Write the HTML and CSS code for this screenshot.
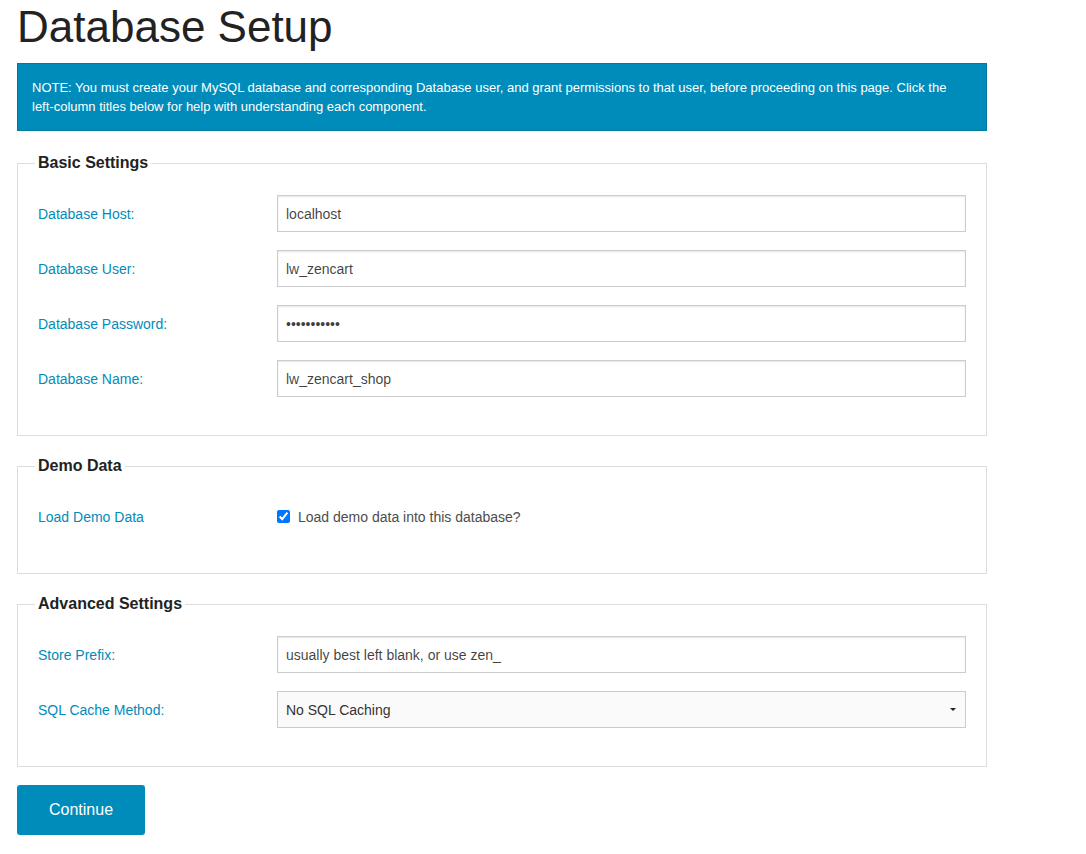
FILE: index.html
```html
<!DOCTYPE html>
<html lang="en">
<head>
<meta charset="utf-8">
<title>Database Setup</title>
<link rel="stylesheet" href="styles.css">
</head>
<body>
<main class="page">
  <h1 class="title">Database Setup</h1>
  <div class="alert">NOTE: You must create your MySQL database and corresponding Database user, and grant permissions to that user, before proceeding on this page. Click the left-column titles below for help with understanding each component.</div>

  <fieldset class="group">
    <legend class="group-title">Basic Settings</legend>
    <div class="row">
      <label class="row-label" for="db_host">Database Host:</label>
      <div class="row-field"><input class="text" id="db_host" type="text" value="localhost"></div>
    </div>
    <div class="row">
      <label class="row-label" for="db_user">Database User:</label>
      <div class="row-field"><input class="text" id="db_user" type="text" value="lw_zencart"></div>
    </div>
    <div class="row">
      <label class="row-label" for="db_pass">Database Password:</label>
      <div class="row-field"><input class="text" id="db_pass" type="password" value="abcdefghijk"></div>
    </div>
    <div class="row">
      <label class="row-label" for="db_name">Database Name:</label>
      <div class="row-field"><input class="text" id="db_name" type="text" value="lw_zencart_shop"></div>
    </div>
  </fieldset>

  <fieldset class="group">
    <legend class="group-title">Demo Data</legend>
    <div class="row">
      <span class="row-label">Load Demo Data</span>
      <div class="row-field">
        <label class="check"><input class="check-box" type="checkbox" checked><span>Load demo data into this database?</span></label>
      </div>
    </div>
  </fieldset>

  <fieldset class="group">
    <legend class="group-title">Advanced Settings</legend>
    <div class="row">
      <label class="row-label" for="db_prefix">Store Prefix:</label>
      <div class="row-field"><input class="text" id="db_prefix" type="text" value="usually best left blank, or use zen_"></div>
    </div>
    <div class="row">
      <label class="row-label" for="sql_cache">SQL Cache Method:</label>
      <div class="row-field">
        <div class="select-wrap">
          <select class="select" id="sql_cache">
            <option>No SQL Caching</option>
            <option>Database</option>
            <option>File</option>
          </select>
        </div>
      </div>
    </div>
  </fieldset>

  <button class="btn" type="button">Continue</button>
</main>
</body>
</html>
```

FILE: styles.css
```css
* { box-sizing: border-box; }

html, body {
  margin: 0;
  padding: 0;
  background: #fff;
}

body {
  font-family: "Liberation Sans", Arial, Helvetica, sans-serif;
  color: #222;
}

.page {
  width: 970px;
  margin-left: 17px;
}

.title {
  margin: 3px 0 12px;
  font-size: 44px;
  line-height: 48px;
  font-weight: normal;
  color: #222;
}

.alert {
  background: #008cba;
  border: 1px solid #0078a0;
  color: #fff;
  font-size: 13px;
  line-height: 19px;
  padding: 14px 24px 14px 14px;
  margin: 0 0 20px;
}

.group {
  border: 1px solid #ddd;
  margin: 0 0 18px;
  padding: 20px;
  min-width: 0;
}

.group-title {
  font-size: 16px;
  font-weight: bold;
  line-height: 24px;
  color: #222;
  background: #fff;
  padding: 0 3px;
  margin-left: -3px;
}

.row {
  display: flex;
  align-items: center;
  margin: 0 -15px 18px;
}

.row-label {
  flex: 0 0 239px;
  padding: 0 15px;
  font-size: 14px;
  color: #008cba;
  cursor: pointer;
}

.row-field {
  flex: 1 1 auto;
  padding: 0 15px;
  min-width: 0;
}

.text,
.select {
  display: block;
  width: 100%;
  height: 37px;
  margin: 0;
  padding: 0 8px;
  border: 1px solid #ccc;
  border-radius: 0;
  box-shadow: inset 0 1px 2px rgba(0, 0, 0, 0.1);
  background: #fff;
  font-family: "Liberation Sans", Arial, Helvetica, sans-serif;
  font-size: 14px;
  color: rgba(0, 0, 0, 0.75);
  outline: none;
}

.select-wrap {
  position: relative;
}

.select {
  appearance: none;
  -webkit-appearance: none;
  background: #fafafa;
  box-shadow: none;
  color: #333;
}

.select-wrap::after {
  content: "";
  position: absolute;
  right: 10px;
  top: 17px;
  border-left: 3px solid transparent;
  border-right: 3px solid transparent;
  border-top: 3px solid #222;
  pointer-events: none;
}

.check {
  display: flex;
  align-items: center;
  height: 37px;
  font-size: 14px;
  color: #4d4d4d;
}

.check-box {
  width: 13px;
  height: 13px;
  margin: 0 8px 0 0;
  accent-color: #0075ff;
}

.btn {
  display: inline-block;
  height: 50px;
  padding: 0 32px;
  border: none;
  border-radius: 3px;
  background: #008cba;
  color: #fff;
  font-family: "Liberation Sans", Arial, Helvetica, sans-serif;
  font-size: 16px;
  cursor: pointer;
}
```
